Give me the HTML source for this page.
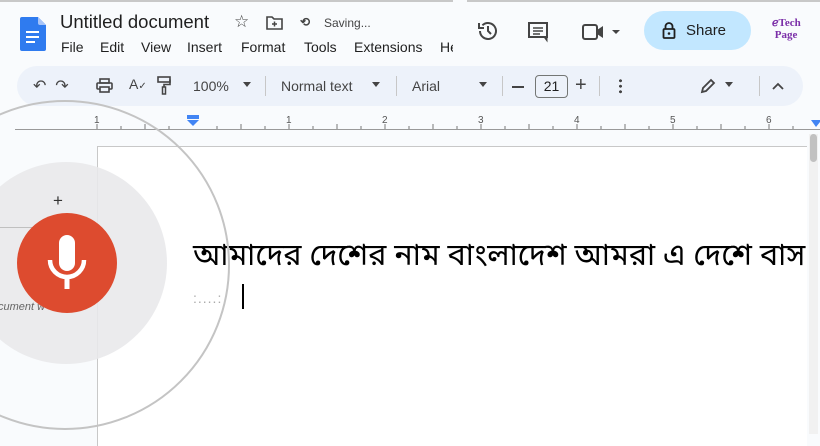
<!DOCTYPE html>
<html><head><meta charset="utf-8"><style>
*{margin:0;padding:0;box-sizing:border-box}
body{width:820px;height:432px;overflow:hidden;background:#f9fbfd;font-family:"Liberation Sans",Arial,sans-serif;position:relative;color:#444746}
.a{position:absolute}
.m{position:absolute;top:39px;font-size:14px;color:#1f1f1f;white-space:nowrap}
</style></head><body>
<div class="a" style="left:0;top:0;width:820px;height:2px;background:#c8c8c8"></div>
<svg class="a" style="left:20px;top:17px" width="26" height="34" viewBox="0 0 26 34"><path d="M2 0h16l8 8v24a2 2 0 0 1-2 2H2a2 2 0 0 1-2-2V2a2 2 0 0 1 2-2z" fill="#2f7bef"/><path d="M18 0l8 8h-6a2 2 0 0 1-2-2z" fill="#a7c4f8"/><rect x="6" y="14" width="13" height="2" fill="#fff"/><rect x="6" y="19" width="13" height="2" fill="#fff"/><rect x="6" y="24" width="9" height="2" fill="#fff"/></svg>
<div class="a" style="left:60px;top:11px;font-size:18.5px;color:#1f1f1f">Untitled document</div>
<div class="a" style="left:234px;top:12px;font-size:17px;color:#444">☆</div>
<svg class="a" style="left:266px;top:16px" width="17" height="14" viewBox="0 0 17 14"><path d="M1 1h5l2 2h8v10H1z" fill="none" stroke="#444" stroke-width="1.6"/><path d="M8.5 5.5v5M6 8h5" stroke="#444" stroke-width="1.5"/></svg>
<div class="a" style="left:300px;top:15px;font-size:12px;color:#444;font-weight:bold">⟲</div>
<div class="a" style="left:324px;top:16px;font-size:12px;color:#444">Saving...</div>
<div class="m" style="left:61px">File</div><div class="m" style="left:100px">Edit</div><div class="m" style="left:141px">View</div><div class="m" style="left:187px">Insert</div><div class="m" style="left:241px">Format</div><div class="m" style="left:304px">Tools</div><div class="m" style="left:354px">Extensions</div><div class="m" style="left:440px">He</div>
<div class="a" style="left:453px;top:0;width:14px;height:60px;background:#f9fbfd"></div>
<svg class="a" style="left:477px;top:20px" width="22" height="22" viewBox="0 0 22 22"><path d="M3 11a8 8 0 1 0 2.4-5.7" fill="none" stroke="#444" stroke-width="2"/><path d="M2 3v5h5" fill="none" stroke="#444" stroke-width="2"/><path d="M11 6v5l3 3" fill="none" stroke="#444" stroke-width="2"/></svg>
<svg class="a" style="left:527px;top:21px" width="22" height="22" viewBox="0 0 22 22"><path d="M2 2h18v14H6l-4 0z" fill="none" stroke="#444" stroke-width="2"/><path d="M17 16l3 4v-4" fill="#444" stroke="#444"/><path d="M6 7h10M6 10h10M6 13h7" stroke="#444" stroke-width="1.6"/></svg>
<svg class="a" style="left:582px;top:22px" width="42" height="20" viewBox="0 0 42 20"><rect x="1" y="3" width="14" height="14" rx="2" fill="none" stroke="#444" stroke-width="2"/><path d="M15 8l6-4v12l-6-4z" fill="#444"/><path d="M30 8h8l-4 4z" fill="#444"/></svg>
<div class="a" style="left:644px;top:11px;width:107px;height:39px;border-radius:20px;background:#c2e7ff"></div>
<svg class="a" style="left:662px;top:22px" width="14" height="17" viewBox="0 0 14 17"><path d="M3.5 7V4.5a3.5 3.5 0 0 1 7 0V7" fill="none" stroke="#1f1f1f" stroke-width="1.8"/><rect x="1.5" y="7" width="11" height="9" rx="1" fill="none" stroke="#1f1f1f" stroke-width="1.8"/><circle cx="7" cy="11.5" r="1.3" fill="#1f1f1f"/></svg>
<div class="a" style="left:686px;top:22px;font-size:15px;color:#1f1f1f">Share</div>
<div class="a" style="left:772px;top:17px;font-size:11px;color:#7b2fa8;font-family:'Liberation Serif',serif;line-height:12px;font-weight:bold">ℯTech<br>&nbsp;Page</div>
<div class="a" style="left:17px;top:66px;width:786px;height:40px;border-radius:20px;background:#edf2fa"></div>
<div class="a" style="left:33px;top:76px;font-size:16px;color:#444;white-space:nowrap">↶ &nbsp;↷</div>
<svg class="a" style="left:96px;top:78px" width="17" height="15" viewBox="0 0 17 15"><rect x="4" y="1" width="9" height="4" fill="none" stroke="#444" stroke-width="1.6"/><rect x="1" y="5" width="15" height="6" rx="1" fill="none" stroke="#444" stroke-width="1.6"/><rect x="4" y="9" width="9" height="5" fill="#edf2fa" stroke="#444" stroke-width="1.6"/></svg>
<div class="a" style="left:129px;top:76px;font-size:14px;color:#444">A<span style="font-size:10px">✓</span></div>
<svg class="a" style="left:157px;top:76px" width="14" height="20" viewBox="0 0 14 20"><rect x="1" y="1" width="12" height="5" fill="none" stroke="#444" stroke-width="1.6"/><path d="M13 3.5v5H7v3" fill="none" stroke="#444" stroke-width="1.6"/><rect x="5.5" y="11" width="3" height="7" fill="none" stroke="#444" stroke-width="1.5"/></svg>
<div class="a" style="left:193px;top:78px;font-size:14px;color:#444">100%</div>
<div class="a" style="left:243px;top:82px;border:4px solid transparent;border-top:5px solid #444"></div>
<div class="a" style="left:265px;top:76px;width:1px;height:20px;background:#c7c7c7"></div>
<div class="a" style="left:281px;top:78px;font-size:14px;color:#444">Normal text</div>
<div class="a" style="left:372px;top:82px;border:4px solid transparent;border-top:5px solid #444"></div>
<div class="a" style="left:396px;top:76px;width:1px;height:20px;background:#c7c7c7"></div>
<div class="a" style="left:412px;top:78px;font-size:14px;color:#444">Arial</div>
<div class="a" style="left:479px;top:82px;border:4px solid transparent;border-top:5px solid #444"></div>
<div class="a" style="left:502px;top:76px;width:1px;height:20px;background:#c7c7c7"></div>
<div class="a" style="left:512px;top:86px;width:12px;height:2px;background:#444"></div>
<div class="a" style="left:535px;top:75px;width:33px;height:23px;border:1px solid #747775;border-radius:4px;font-size:14px;text-align:center;line-height:21px;color:#1f1f1f">21</div>
<div class="a" style="left:575px;top:74px;font-size:20px;color:#444">+</div>
<div class="a" style="left:599px;top:76px;width:1px;height:20px;background:#c7c7c7"></div>
<div class="a" style="left:619px;top:78px;width:3px;height:16px;background:radial-gradient(circle,#444 1.4px,transparent 1.6px) 0 0/3px 5.5px"></div>
<svg class="a" style="left:700px;top:78px" width="16" height="16" viewBox="0 0 16 16"><path d="M2 14l1-4 8-8 3 3-8 8z" fill="none" stroke="#444" stroke-width="1.8"/></svg>
<div class="a" style="left:725px;top:82px;border:4px solid transparent;border-top:5px solid #444"></div>
<div class="a" style="left:759px;top:76px;width:1px;height:20px;background:#c7c7c7"></div>
<svg class="a" style="left:772px;top:82px" width="12" height="8" viewBox="0 0 12 8"><path d="M1 7l5-5 5 5" fill="none" stroke="#444" stroke-width="1.8"/></svg>
<svg class="a" style="left:0;top:112px" width="820" height="20" viewBox="0 0 820 20">
<line x1="15" y1="17.5" x2="820" y2="17.5" stroke="#999" stroke-width="1"/>
<g stroke="#777" stroke-width="1">
<path d="M97 12v5M121 14v3M145 12v5M169 14v3M217 14v3M241 12v5M265 14v3M289 12v5M313 14v3M337 12v5M361 14v3M385 12v5M409 14v3M433 12v5M457 14v3M481 12v5M505 14v3M529 12v5M553 14v3M577 12v5M601 14v3M625 12v5M649 14v3M673 12v5M697 14v3M721 12v5M745 14v3M769 12v5M793 14v3"/>
</g>
<g font-size="10" fill="#555" font-family="Liberation Sans"><text x="94" y="11">1</text><text x="286" y="11">1</text><text x="382" y="11">2</text><text x="478" y="11">3</text><text x="574" y="11">4</text><text x="670" y="11">5</text><text x="766" y="11">6</text></g>
<rect x="187" y="3" width="12" height="4" fill="#4285f4"/><path d="M187 8h12l-6 6z" fill="#4285f4"/>
<path d="M811 8h9v2l-4 5z" fill="#4285f4"/>
</svg>
<div class="a" style="left:97px;top:146px;width:710px;height:300px;background:#fff;border-left:1px solid #c8c8c8;border-top:1px solid #c8c8c8;overflow:hidden">
<div class="a" style="left:95px;top:89px;font-size:30.6px;color:#000;white-space:nowrap;font-family:'Noto Sans Bengali','Lohit Bengali','Liberation Sans',sans-serif;line-height:44px">আমাদের দেশের নাম বাংলাদেশ আমরা এ দেশে বাস</div>
</div>
<div class="a" style="left:809px;top:134px;width:9px;height:300px;background:#f1f1f1"></div>
<div class="a" style="left:810px;top:134px;width:7px;height:28px;border-radius:4px;background:#c1c1c1"></div>
<div class="a" style="left:193px;top:290px;font-size:14px;color:#aaa;letter-spacing:1px">:....:</div>
<div class="a" style="left:242px;top:284px;width:2px;height:25px;background:#000"></div>
<div class="a" style="left:-100px;top:100px;width:330px;height:330px;border-radius:50%;border:2px solid #c4c4c4"></div>
<div class="a" style="left:-35px;top:162px;width:202px;height:202px;border-radius:50%;background:rgba(232,232,234,0.88)"></div>
<div class="a" style="left:0;top:227px;width:97px;height:1px;background:#c0c0c0"></div>
<div class="a" style="left:-2px;top:301px;font-size:11px;color:#666;font-style:italic">cument w</div>
<div class="a" style="left:53px;top:191px;font-size:17px;color:#333">+</div>
<div class="a" style="left:17px;top:213px;width:100px;height:100px;border-radius:50%;background:#dd4b2f"></div>
<svg class="a" style="left:44px;top:233px" width="46" height="62" viewBox="0 0 46 62"><rect x="15" y="2" width="16" height="36" rx="8" fill="#fff"/><path d="M6 27a17 17 0 0 0 34 0" fill="none" stroke="#fff" stroke-width="4.5"/><rect x="20.5" y="43" width="5" height="13" fill="#fff"/></svg>
</body></html>
